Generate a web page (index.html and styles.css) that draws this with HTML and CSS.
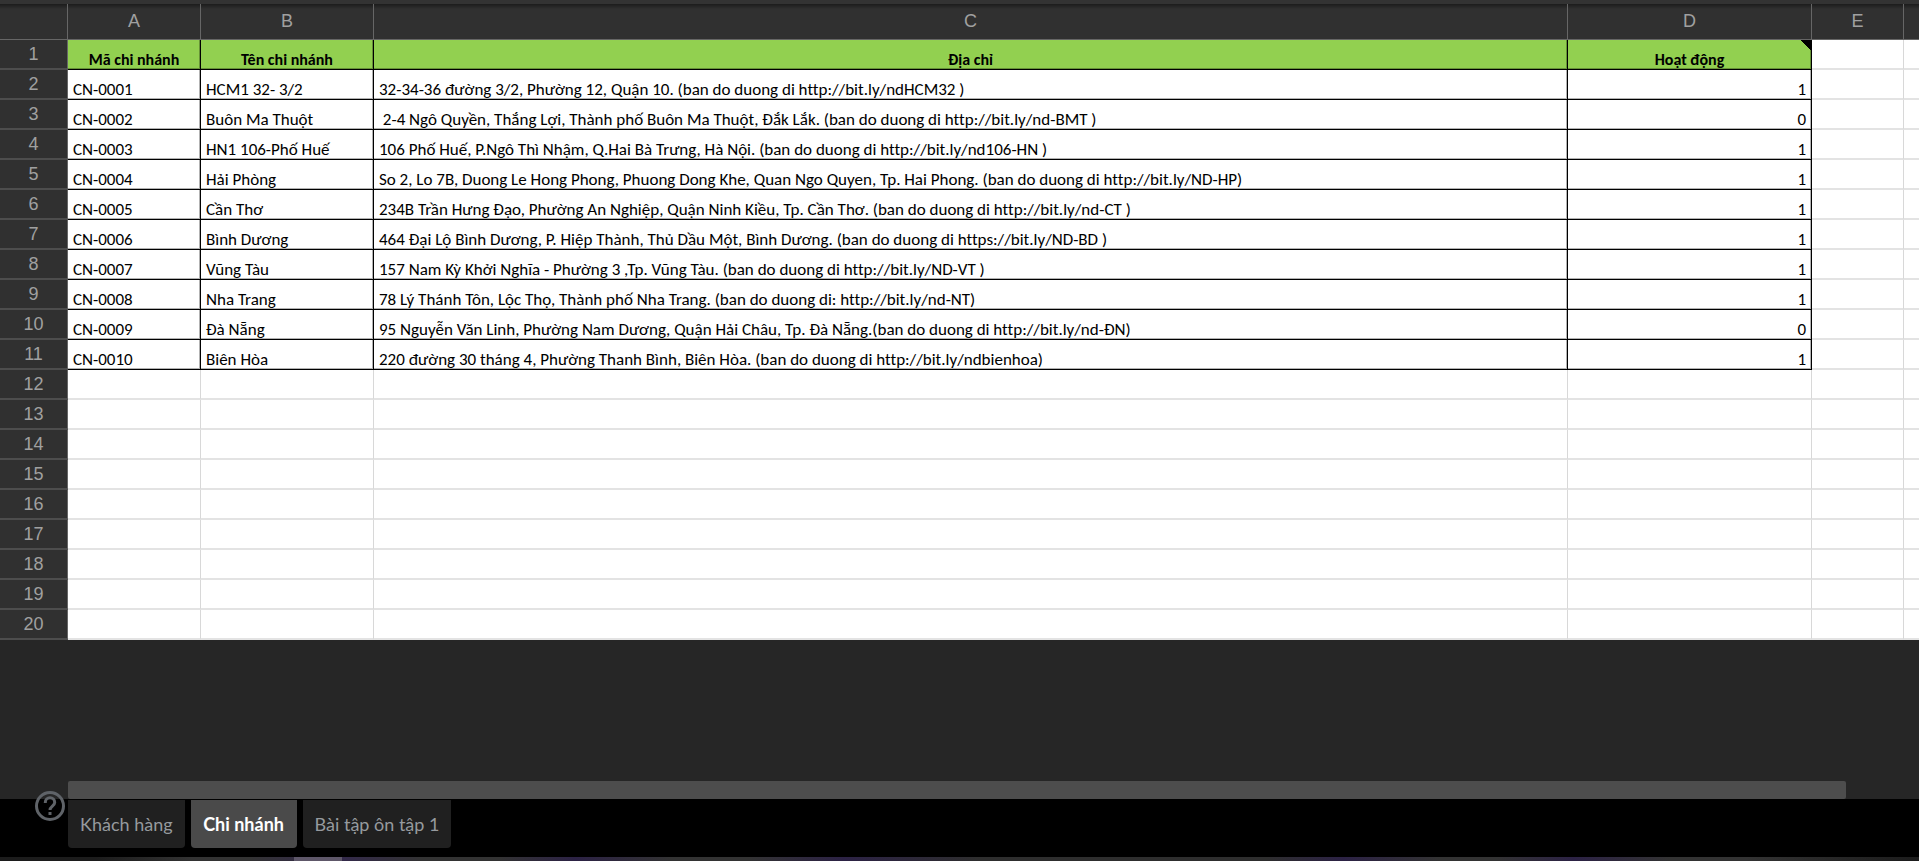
FILE: index.html
```html
<!DOCTYPE html>
<html lang="vi">
<head>
<meta charset="utf-8">
<title>Chi nhánh</title>
<link rel="stylesheet" href="styles.css">
</head>
<body>
<main class="sheet">
<table class="grid">
<colgroup><col class="col-head"><col class="col-a"><col class="col-b"><col><col class="col-d"><col class="col-e"><col class="col-f"></colgroup>
<thead><tr><th></th><th scope="col">A</th><th scope="col">B</th><th scope="col">C</th><th scope="col">D</th><th scope="col">E</th><th></th></tr></thead>
<tbody>
<tr class="title"><th scope="row">1</th><td>Mã chi nhánh</td><td>Tên chi nhánh</td><td>Địa chỉ</td><td class="noted">Hoạt động</td><td></td><td></td></tr>
<tr class="data"><th scope="row">2</th><td>CN-0001</td><td>HCM1 32- 3/2</td><td>32-34-36 đường 3/2, Phường 12, Quận 10. (ban do duong di http://bit.ly/ndHCM32 )</td><td>1</td><td></td><td></td></tr>
<tr class="data"><th scope="row">3</th><td>CN-0002</td><td>Buôn Ma Thuột</td><td> 2-4 Ngô Quyền, Thắng Lợi, Thành phố Buôn Ma Thuột, Đắk Lắk. (ban do duong di http://bit.ly/nd-BMT )</td><td>0</td><td></td><td></td></tr>
<tr class="data"><th scope="row">4</th><td>CN-0003</td><td>HN1 106-Phố Huế</td><td>106 Phố Huế, P.Ngô Thì Nhậm, Q.Hai Bà Trưng, Hà Nội. (ban do duong di http://bit.ly/nd106-HN )</td><td>1</td><td></td><td></td></tr>
<tr class="data"><th scope="row">5</th><td>CN-0004</td><td>Hải Phòng</td><td>So 2, Lo 7B, Duong Le Hong Phong, Phuong Dong Khe, Quan Ngo Quyen, Tp. Hai Phong. (ban do duong di http://bit.ly/ND-HP)</td><td>1</td><td></td><td></td></tr>
<tr class="data"><th scope="row">6</th><td>CN-0005</td><td>Cần Thơ</td><td>234B Trần Hưng Đạo, Phường An Nghiệp, Quận Ninh Kiều, Tp. Cần Thơ. (ban do duong di http://bit.ly/nd-CT )</td><td>1</td><td></td><td></td></tr>
<tr class="data"><th scope="row">7</th><td>CN-0006</td><td>Bình Dương</td><td>464 Đại Lộ Bình Dương, P. Hiệp Thành, Thủ Dầu Một, Bình Dương. (ban do duong di https://bit.ly/ND-BD )</td><td>1</td><td></td><td></td></tr>
<tr class="data"><th scope="row">8</th><td>CN-0007</td><td>Vũng Tàu</td><td>157 Nam Kỳ Khởi Nghĩa - Phường 3 ,Tp. Vũng Tàu. (ban do duong di http://bit.ly/ND-VT )</td><td>1</td><td></td><td></td></tr>
<tr class="data"><th scope="row">9</th><td>CN-0008</td><td>Nha Trang</td><td>78 Lý Thánh Tôn, Lộc Thọ, Thành phố Nha Trang. (ban do duong di: http://bit.ly/nd-NT)</td><td>1</td><td></td><td></td></tr>
<tr class="data"><th scope="row">10</th><td>CN-0009</td><td>Đà Nẵng</td><td>95 Nguyễn Văn Linh, Phường Nam Dương, Quận Hải Châu, Tp. Đà Nẵng.(ban do duong di http://bit.ly/nd-ĐN)</td><td>0</td><td></td><td></td></tr>
<tr class="data"><th scope="row">11</th><td>CN-0010</td><td>Biên Hòa</td><td>220 đường 30 tháng 4, Phường Thanh Bình, Biên Hòa. (ban do duong di http://bit.ly/ndbienhoa)</td><td>1</td><td></td><td></td></tr>
<tr><th scope="row">12</th><td></td><td></td><td></td><td></td><td></td><td></td></tr>
<tr><th scope="row">13</th><td></td><td></td><td></td><td></td><td></td><td></td></tr>
<tr><th scope="row">14</th><td></td><td></td><td></td><td></td><td></td><td></td></tr>
<tr><th scope="row">15</th><td></td><td></td><td></td><td></td><td></td><td></td></tr>
<tr><th scope="row">16</th><td></td><td></td><td></td><td></td><td></td><td></td></tr>
<tr><th scope="row">17</th><td></td><td></td><td></td><td></td><td></td><td></td></tr>
<tr><th scope="row">18</th><td></td><td></td><td></td><td></td><td></td><td></td></tr>
<tr><th scope="row">19</th><td></td><td></td><td></td><td></td><td></td><td></td></tr>
<tr><th scope="row">20</th><td></td><td></td><td></td><td></td><td></td><td></td></tr>
</tbody>
</table>
<div class="track"><div class="thumb"></div></div>
</main>
<footer class="bar">
<button class="help" type="button" aria-label="?"><svg viewBox="0 0 30 30" width="30" height="30" fill="none" stroke="currentColor" stroke-width="3"><circle cx="15" cy="15" r="13.5"/><path d="M10.300 12v-.5a4.700 4.700 0 0 1 9.400 0c0 3.400-4.700 3.800-4.700 7.500"/><path d="M15 21v3"/></svg></button>
<nav class="tabs">
<button class="tab" type="button">Khách hàng</button>
<button class="tab active" type="button">Chi nhánh</button>
<button class="tab" type="button">Bài tập ôn tập 1</button>
</nav>
</footer>
<div class="edge"></div>
</body>
</html>
```
FILE: styles.css
```css
* { box-sizing: border-box; }
body {
  margin: 0;
  min-height: 100vh;
  display: flex;
  flex-direction: column;
  background: #000;
  font-family: "Liberation Sans", Arial, sans-serif;
}
.sheet {
  flex: 1;
  display: flex;
  flex-direction: column;
  background: #262626;
  border-top: 4px solid #333;
}
.grid {
  width: 100%;
  table-layout: fixed;
  border-collapse: separate;
  border-spacing: 0;
}
.col-head { width: 68px; }
.col-a { width: 133px; }
.col-b { width: 173px; }
.col-d { width: 244px; }
.col-e { width: 92px; }
.col-f { width: 15px; }
.grid th {
  height: 30px;
  padding: 0;
  background: #303030;
  color: #a0a0a0;
  font-size: 18px;
  font-weight: 400;
  line-height: 20px;
  border-right: 1px solid #666;
  border-bottom: 2px solid #4d4d4d;
}
.grid thead th {
  height: 36px;
  padding-bottom: 2px;
  background: linear-gradient(#1c1c1c, #303030 5px);
  border-bottom: 1px solid #666;
}
.grid td {
  height: 30px;
  padding: 0 5px;
  background: #fff;
  color: #000;
  font-family: Carlito, Lato, sans-serif;
  font-size: 17px;
  font-variant-ligatures: none;
  line-height: 18px;
  vertical-align: bottom;
  white-space: pre;
  overflow: hidden;
  border-right: 1px solid #d8d8d8;
  border-bottom: 2px solid #e3e3e3;
}
.grid tr > :last-child { border-right: 0; }
.title td:nth-child(-n+5), .data td:nth-child(-n+5) {
  border-right-color: #000;
  border-bottom: 1px solid #000;
  box-shadow: inset -1px -1px 0 rgba(0, 0, 0, 0.3);
}
.title td:nth-child(-n+5) {
  background: #92d050;
  font-size: 16px;
  font-weight: 700;
  text-align: center;
}
.title td.noted:nth-child(5) {
  background: linear-gradient(45deg, transparent 50%, #000 50%) top right / 10px 10px no-repeat, #92d050;
}
.data td:nth-child(5) { text-align: right; }
.track { margin: auto 73px 0 68px; }
.thumb {
  height: 18px;
  background: #4d4d4d;
  border-radius: 2px;
}
.bar {
  height: 58px;
  display: flex;
  align-items: flex-start;
  background: #000;
}
.help {
  width: 30px;
  height: 30px;
  margin: -8px 3px 0 35px;
  padding: 0;
  border: 0;
  background: none;
  color: #5f6368;
}
.help svg { display: block; }
.tabs {
  display: flex;
  gap: 6px;
  padding-top: 1px;
}
.tab {
  height: 48px;
  min-width: 106px;
  padding: 0 12px;
  border: 0;
  border-radius: 0 0 4px 4px;
  background: #202020;
  color: #969a9e;
  font-family: "Google Sans", Lato, sans-serif;
  font-size: 18px;
  line-height: 24px;
}
.tab.active {
  background: #4a4a4a;
  color: #fff;
  font-weight: 700;
}
.edge {
  height: 4px;
  background: linear-gradient(90deg, #1c1c1c 5%, #333 10%, #333 13%, #332d40 294px, #5e5769 294px, #5e5769 342px, #33294a 342px, #333 22%, #333 26%, #2c2245 30%, #333 35%, #333 39%, #2c2245 44%, #2e2e2e 51%, #2e2e2e 66%, #2c2245 70%, #333 75%, #333 78%, #2c2245 82%, #333 87%, #333 91%, #1c1c1c);
}
```
